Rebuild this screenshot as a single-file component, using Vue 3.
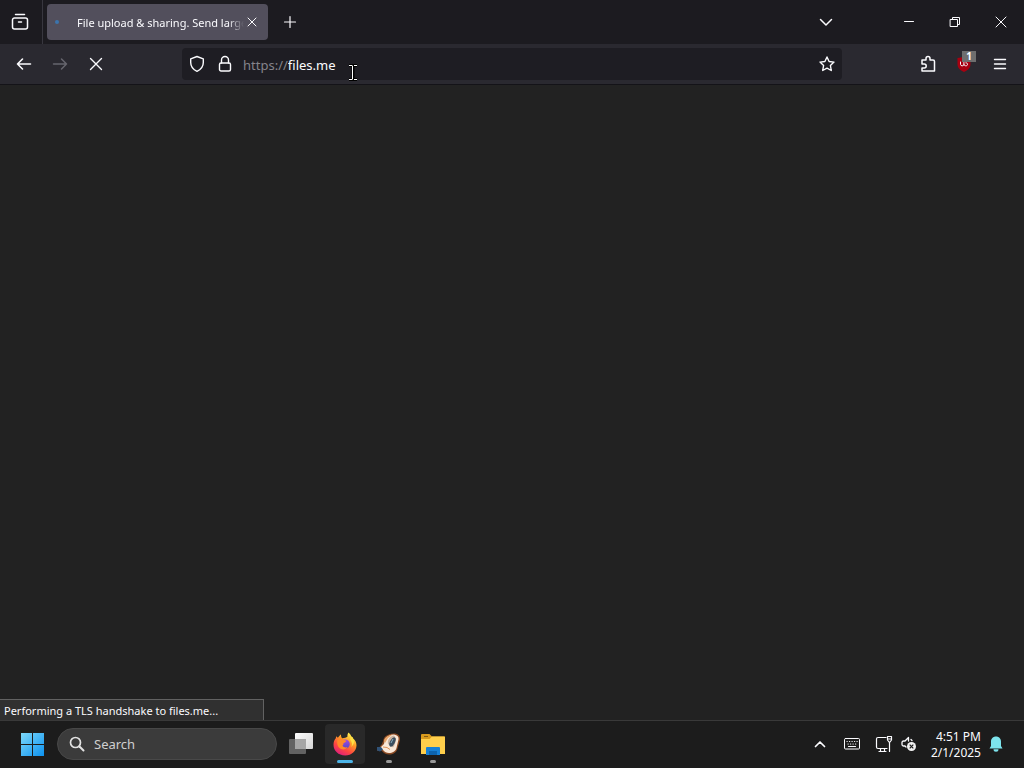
<style>
body {
    margin: 0;
    background: #222222;
}
</style>

<style scoped>
.screen {
    position: relative;
    display: flex;
    flex-direction: column;
    min-height: 100vh;
    background: #222222;
    color: #fbfbfe;
    font-family: "Noto Sans", "Open Sans", sans-serif;
    font-size: 12px;
    overflow: hidden;
}

button {
    display: flex;
    align-items: center;
    justify-content: center;
    padding: 0;
    border: none;
    background: none;
    color: inherit;
    font: inherit;
    cursor: pointer;
}

input {
    min-width: 0;
    padding: 0;
    border: none;
    outline: none;
    background: none;
    color: inherit;
    font: inherit;
}

svg {
    display: block;
    flex: none;
}

.line {
    fill: none;
    stroke: currentColor;
    stroke-linecap: round;
    stroke-linejoin: round;
}

.title-bar {
    display: flex;
    align-items: center;
    height: 44px;
    background: #1c1b20;
}

.view-btn {
    width: 43px;
    height: 44px;
    padding-right: 2px;
    border-right: 1px solid #38373f;
}

.tab {
    display: flex;
    align-items: center;
    box-sizing: border-box;
    width: 221px;
    height: 36px;
    margin-left: 4px;
    padding: 0 8px;
    border-radius: 4px;
    background: #524f5c;
}

.tab-spinner {
    width: 4px;
    height: 4px;
    margin-right: 18px;
    border-radius: 50%;
    background: #3c74ad;
}

.tab-title {
    flex: 1;
    overflow: hidden;
    padding-top: 2px;
    font-size: 11px;
    line-height: 18px;
    white-space: nowrap;
    mask-image: linear-gradient(to left, transparent, #000 16px);
}

.tab-close {
    width: 16px;
    height: 20px;
}

.tool-btn {
    width: 36px;
    height: 36px;
}

.tool-btn:disabled {
    color: #66656d;
}

.new-tab {
    margin-left: 4px;
}

.tabs-menu {
    margin-left: auto;
    margin-right: 42px;
}

.window-btn {
    width: 46px;
    height: 44px;
}

.nav-bar {
    display: flex;
    align-items: center;
    height: 40px;
    padding: 0 6px;
    border-bottom: 1px solid #141318;
    background: #2a2930;
}

.url-bar {
    display: flex;
    flex: 1;
    align-items: center;
    height: 32px;
    margin: 0 68px;
    border-radius: 4px;
    background: #1e1d23;
    font-size: 13px;
}

.url-icon {
    width: 28px;
    height: 32px;
}

.url-icon:first-child,
.url-icon:last-child {
    margin-left: 1px;
}

.url-icon:last-child {
    margin-right: 1px;
}

.url-bar label {
    margin-left: 4px;
    color: #85848b;
}

.url-bar label,
.url-bar input {
    padding-top: 2px;
    line-height: 18px;
}

.url-bar input {
    flex: 1;
}

.page {
    position: relative;
    flex: 1;
}

.status {
    position: absolute;
    left: 0;
    bottom: 0;
    box-sizing: border-box;
    width: 264px;
    padding: 2px 4px 0;
    border: 1px solid #626262;
    border-width: 1px 1px 0 0;
    background: #303030;
    font-size: 11px;
    line-height: 18px;
    white-space: nowrap;
}

.cursor {
    position: absolute;
    left: 348px;
    top: 64px;
    pointer-events: none;
}

.taskbar {
    display: flex;
    align-items: center;
    height: 46px;
    padding-bottom: 1px;
    border-top: 1px solid #393939;
    background: #1c1c1c;
}

.start-btn {
    width: 40px;
    height: 40px;
    margin-left: 12px;
}

.search {
    display: flex;
    align-items: center;
    box-sizing: border-box;
    width: 220px;
    height: 32px;
    margin-left: 5px;
    padding: 0 11px;
    border: 1px solid #484848;
    border-radius: 16px;
    background: #3b3b3b;
}

.search input {
    width: 100%;
    margin-left: 9px;
    font-size: 13px;
}

.search input::placeholder {
    color: #cfcfcf;
    opacity: 1;
}

.apps {
    display: flex;
    gap: 4px;
    margin-left: 4px;
}

.app-btn {
    position: relative;
    width: 40px;
    height: 40px;
    border-radius: 4px;
}

.app-btn.active {
    background: #292929;
}

.app-btn.running::after {
    content: "";
    position: absolute;
    bottom: 1px;
    width: 6px;
    height: 3px;
    border-radius: 2px;
    background: #9a9a9a;
}

.app-btn.active::after {
    width: 16px;
    background: #4cb4e7;
}

.tray {
    display: flex;
    align-items: center;
    margin-left: auto;
    padding-right: 16px;
}

.tray-btn {
    width: 32px;
    height: 40px;
}

.tray-btn.narrow {
    width: 18px;
}

.clock {
    display: block;
    width: 63px;
    padding-top: 2px;
    line-height: 16px;
    text-align: right;
    white-space: nowrap;
}

.bell {
    width: 24px;
    height: 40px;
    margin-left: 3px;
}
</style>

<template>
    <div class="screen">
        <header class="title-bar">
            <button class="view-btn" aria-label="Firefox View">
                <svg class="line" width="18" height="18" viewBox="0 0 18 18" stroke-width="1.5">
                    <path d="M4.5 1.5h9M3.5 5h11a2 2 0 0 1 2 2v7a2 2 0 0 1-2 2h-11a2 2 0 0 1-2-2V7a2 2 0 0 1 2-2M7.5 9h3" />
                </svg>
            </button>
            <div class="tab">
                <span class="tab-spinner"></span>
                <span class="tab-title">File upload &amp; sharing. Send large files</span>
                <button class="tab-close" aria-label="Close tab">
                    <svg class="line" width="10" height="10" viewBox="0 0 10 10"><path d="M1 1l8 8M9 1L1 9" /></svg>
                </button>
            </div>
            <button class="tool-btn new-tab" aria-label="New tab">
                <svg class="line" width="14" height="14" viewBox="0 0 14 14" stroke-width="1.2"><path d="M7 1.5v11M1.5 7h11" /></svg>
            </button>
            <button class="tool-btn tabs-menu" aria-label="List all tabs">
                <svg class="line" width="14" height="14" viewBox="0 0 14 14" stroke-width="1.5"><path d="M1.5 4.5L7 10l5.5-5.5" /></svg>
            </button>
            <button class="window-btn" aria-label="Minimize">
                <svg class="line" width="10" height="10" viewBox="0 0 10 10"><path d="M.5 4.5h9" /></svg>
            </button>
            <button class="window-btn" aria-label="Restore">
                <svg class="line" width="12" height="12" viewBox="0 0 12 12"><path d="M1.5 3.5h7v7h-7zM3.5 3V1.5h7v7H9" /></svg>
            </button>
            <button class="window-btn" aria-label="Close">
                <svg class="line" width="12" height="12" viewBox="0 0 12 12"><path d="M1 1l10 10M11 1L1 11" /></svg>
            </button>
        </header>

        <nav class="nav-bar">
            <button class="tool-btn" aria-label="Back">
                <svg class="line" width="16" height="16" viewBox="0 0 16 16" stroke-width="1.6"><path d="M14.5 8H1.5M6.5 3l-5 5 5 5" /></svg>
            </button>
            <button class="tool-btn" aria-label="Forward" disabled>
                <svg class="line" width="16" height="16" viewBox="0 0 16 16" stroke-width="1.5"><path d="M1.5 8h13M9.5 3l5 5-5 5" /></svg>
            </button>
            <button class="tool-btn" aria-label="Stop">
                <svg class="line" width="14" height="14" viewBox="0 0 14 14" stroke-width="1.4"><path d="M1.500 1.5l11 11M12.5 1.5l-11 11" /></svg>
            </button>
            <div class="url-bar">
                <button class="url-icon" aria-label="Tracking protection">
                    <svg class="line" width="16" height="18" viewBox="0 0 16 18" stroke-width="1.4">
                        <path d="M8 1.5l6.3 2.3v3.7c0 4-2.4 7-6.3 8.8-3.9-1.8-6.3-4.8-6.3-8.8V3.8z" />
                    </svg>
                </button>
                <button class="url-icon" aria-label="Site information">
                    <svg class="line" width="14" height="18" viewBox="0 0 14 18" stroke-width="1.4">
                        <rect x="1.5" y="8" width="11" height="8" rx="1.5" />
                        <path d="M3.5 8V5a3.5 3.5 0 0 1 7 0v3" />
                    </svg>
                </button>
                <label for="url">https://</label>
                <input id="url" v-model="url" type="text" spellcheck="false" />
                <button class="url-icon" aria-label="Bookmark this page">
                    <svg class="line" width="16" height="16" viewBox="0 0 16 16" stroke-width="1.4">
                        <path d="M8 1l2.100 4.500 4.900.6-3.600 3.400.9 5L8 12.100l-4.300 2.400.9-5L1 6.100l4.900-.6z" />
                    </svg>
                </button>
            </div>
            <button class="tool-btn" aria-label="Extensions">
                <svg class="line" width="16" height="18" viewBox="0 0 16 18" stroke-width="1.5">
                    <path d="M2 8V5h4V3.500a2 2 0 0 1 4 0V5h3a1.500 1.500 0 0 1 1.500 1.500V16H2v-3h2.200a2 2 0 0 0 0-4H2z" />
                </svg>
            </button>
            <button class="tool-btn" aria-label="uBlock Origin, 1 blocked">
                <svg width="28" height="32" viewBox="-2 -4 28 32">
                    <path d="M12 4c2 1.500 4 1.500 6.500 2v6c0 4-2.500 6-6.500 8-4-2-6.500-4-6.500-8V6C8 5.500 10 5.500 12 4z" fill="#a80010" />
                    <path class="line" d="M8.500 10v2.500c0 1.800 3.400 1.800 3.400 0V10.500m0 2c0 1.800 3.600 1.800 3.600 0 0-1.300-.7-1.800-1.600-1.700" />
                    <path d="M10 -1h14v11H10z" fill="#6e6e6e" />
                    <text x="17" y="8" fill="#fff" font-size="10" font-weight="bold" text-anchor="middle">1</text>
                </svg>
            </button>
            <button class="tool-btn" aria-label="Open application menu">
                <svg class="line" width="14" height="14" viewBox="0 0 14 14" stroke-width="1.4"><path d="M1.5 2.5h11M1.5 7h11M1.5 11.5h11" /></svg>
            </button>
        </nav>

        <main class="page">
            <div class="status" role="status">Performing a TLS handshake to files.me...</div>
        </main>

        <svg class="cursor" width="10" height="17" viewBox="0 0 10 17" fill="none">
            <path d="M1 1.5h8M5 1.5v14M1 15.5h8" stroke="#000" stroke-width="3" />
            <path d="M1 1.5h3M6 1.5h3M4.5 1.5v14M1 15.5h3M6 15.5h3" stroke="#fff" />
        </svg>

        <footer class="taskbar">
            <button class="start-btn" aria-label="Start">
                <svg width="24" height="24" viewBox="0 0 24 24">
                    <defs>
                        <linearGradient id="win" x1="0" y1="0" x2="24" y2="24" gradientUnits="userSpaceOnUse">
                            <stop offset="0" stop-color="#82dcfb" />
                            <stop offset="1" stop-color="#0c91ef" />
                        </linearGradient>
                    </defs>
                    <path d="M1 1h11v11H1zM13 1h11v11H13zM1 13h11v11H1zM13 13h11v11H13z" fill="url(#win)" />
                </svg>
            </button>
            <div class="search">
                <svg width="16" height="16" viewBox="0 0 16 16" fill="none" stroke="#e2e2e2" stroke-linecap="round">
                    <circle cx="6.5" cy="6.5" r="5" stroke-width="1.7" />
                    <path d="M10.5 10.5l4 4" stroke-width="2" />
                </svg>
                <input v-model="query" type="text" placeholder="Search" aria-label="Search" />
            </div>
            <div class="apps">
                <button class="app-btn" aria-label="Task view">
                    <svg width="26" height="24" viewBox="0 0 26 24">
                        <defs>
                            <linearGradient id="pane" x1="0" y1="0" x2="1" y2="1">
                                <stop offset="0" stop-color="#fff" />
                                <stop offset="1" stop-color="#d5d5d5" />
                            </linearGradient>
                        </defs>
                        <rect x="1" y="7" width="17" height="15" rx="1" fill="#626262" />
                        <rect x="7" y="1" width="18" height="16" rx="1" fill="url(#pane)" />
                        <path d="M7 7h11v10H7z" fill="#a6a6a6" />
                    </svg>
                </button>
                <button class="app-btn running active" aria-label="Firefox">
                    <svg width="24" height="24" viewBox="0 0 24 24">
                        <defs>
                            <linearGradient id="fox" x1="18" y1="2" x2="6" y2="22" gradientUnits="userSpaceOnUse">
                                <stop offset="0" stop-color="#fff44f" />
                                <stop offset=".35" stop-color="#ff9a28" />
                                <stop offset=".7" stop-color="#ff483f" />
                                <stop offset="1" stop-color="#e32178" />
                            </linearGradient>
                            <linearGradient id="globe" x1="0" y1="0" x2="0" y2="1">
                                <stop offset="0" stop-color="#a34be0" />
                                <stop offset="1" stop-color="#5647c5" />
                            </linearGradient>
                        </defs>
                        <path d="M15.500.5c1.200 1.200 2.200 2.400 2.700 4.100 1.200.3 1.800 1.100 2 2.100 1.800 1 3.300 3.500 3.300 6.600 0 5.700-5 10.200-11.300 10.200C5.300 23.500.5 18.800.5 12.800c0-3 .9-5 2.300-6.600l.4-2 1.700 1.600C6 4.500 6.700 3.300 8 2.600c-.1 1.500.2 2.800 1.200 3.700 2.300-.1 4.200-.3 5.300-1.700-.2-1.500.1-2.900 1-4.100z" fill="url(#fox)" />
                        <circle cx="12.300" cy="12" r="4.500" fill="url(#globe)" />
                        <path d="M4.500 7.500c2-1 4.200-.6 5.700.6 1 .2 2.400.2 3.300.7-.5 1.300-1.700 2-3 2.300.2 1.100-.2 1.900-1 2.400 1 2 3 2.300 5.200 1.600-1.500 2.700-6 3.300-8.500.7-1.900-1.900-2.500-5-1.700-8.300z" fill="#ff8a28" />
                        <path d="M15.500 1c2 2 2.300 4.300 1.700 6.500 2 2.500 2.300 5.200 1 7.500 4.500-3.600 3.200-8.400 0-10.400-.5-1.600-1.500-2.700-2.700-3.600z" fill="#ffe044" />
                    </svg>
                </button>
                <button class="app-btn running" aria-label="Image editor">
                    <svg width="26" height="24" viewBox="0 0 26 24">
                        <path d="M2 17l4-5 2-6c2-3 6-4.500 10-4.500 4 0 6.500 2.500 6 6.500l-2.500 8.500c-1 4-4.500 6-8.500 6-3 0-5.500-1.500-7.500-4L1 19z" fill="#8a4a24" />
                        <path d="M4 16l4-4 1-5c2-3 5.500-4.500 9-4.500 3.500.5 5 2.500 4.500 5l-2 8.500c-1 3.500-4 5-7.500 5-2.500 0-4.500-1-6-3z" fill="#fae8d8" />
                        <path d="M8 8c1.500-3.500 5-5 8-5l-4 3-3 5z" fill="#e8a468" />
                        <path d="M12 12c-1-4 2-8 6-8.500 2.500 2 2 8-1 12z" fill="#c9b3a2" />
                        <ellipse cx="16.500" cy="10" rx="2.400" ry="5" transform="rotate(28 16.500 10)" fill="#3c4f5f" />
                        <path d="M15 11l2-4" stroke="#8fb3c4" />
                        <path d="M1 15h4l2 2.500-3 2-3-1z" fill="#305277" />
                        <path d="M7 15l4 .5 3 2" fill="none" stroke="#e0955a" />
                    </svg>
                </button>
                <button class="app-btn running" aria-label="File Explorer">
                    <svg width="26" height="24" viewBox="0 0 26 24">
                        <path d="M1 3a1 1 0 0 1 1-1h7.500L12 4.500h12a1 1 0 0 1 1 1V11H1z" fill="#d89a1d" />
                        <path d="M1 7h8.500L12 4.500h12.500a.5.500 0 0 1 .5.500v17H1z" fill="#ffcf4b" />
                        <path d="M6 23v-7a1 1 0 0 1 1-1h12a1 1 0 0 1 1 1v7z" fill="#1680d5" />
                        <path d="M9 19h8v4H9z" fill="#0c63ae" />
                        <path d="M4 4.500h4" stroke="#7f5a14" />
                    </svg>
                </button>
            </div>
            <div class="tray">
                <button class="tray-btn" aria-label="Show hidden icons">
                    <svg class="line" width="12" height="12" viewBox="0 0 12 12" stroke-width="1.7"><path d="M1.5 8.5L6 4l4.5 4.5" /></svg>
                </button>
                <button class="tray-btn" aria-label="Touch keyboard">
                    <svg class="line" width="16" height="12" viewBox="0 0 16 12">
                        <rect x=".5" y=".5" width="15" height="10.5" rx="1" />
                        <path d="M3 3.500h.2M5.500 3.500h.2M8 3.500h.2M10.500 3.500h.2M13 3.500h.2M4 6h.2M6.500 6h.2M9 6h.2M11.500 6h.2M4.500 8.500h7" stroke-width="1.2" />
                    </svg>
                </button>
                <button class="tray-btn" aria-label="Network">
                    <svg class="line" width="18" height="18" viewBox="0 0 18 18" stroke-width="1.2">
                        <path d="M11 2.500H3a1.500 1.500 0 0 0-1.500 1.500v8A1.500 1.500 0 0 0 3 13.500h9M5.500 13.500v2.500M9.500 13.500v2.500M4 16.500h7M14.500 7v9.500M12.500 1.500h4V5L15 7h-1l-1.500-2zM12.500 4h4" />
                    </svg>
                </button>
                <button class="tray-btn narrow" aria-label="Volume">
                    <svg width="16" height="16" viewBox="0 0 16 16">
                        <path class="line" d="M7.500 5V1.500L4 5H2.500A1.500 1.500 0 0 0 1 6.500v2A1.500 1.500 0 0 0 2.500 10H4l1 1M10 3.500l1 1" stroke-width="1.3" />
                        <circle cx="10.5" cy="10.5" r="4.5" fill="#f2f2f2" />
                        <path d="M8.700 8.700l3.600 3.600M12.300 8.700l-3.600 3.600" stroke="#1c1c1c" stroke-width="1.2" />
                    </svg>
                </button>
                <button class="clock">4:51 PM<br />2/1/2025</button>
                <button class="bell" aria-label="Notifications">
                    <svg width="16" height="18" viewBox="0 0 16 18" fill="#7de3ec">
                        <path d="M8 1.500c3 0 5 2.200 5 5V11l1.500 2.500H1.500L3 11V6.500c0-2.800 2-5 5-5zM5.500 14.300h5a2.500 2.500 0 0 1-5 0z" />
                    </svg>
                </button>
            </div>
        </footer>
    </div>
</template>

<script setup>
import { ref } from 'vue'

const url = ref('files.me')
const query = ref('')
</script>
